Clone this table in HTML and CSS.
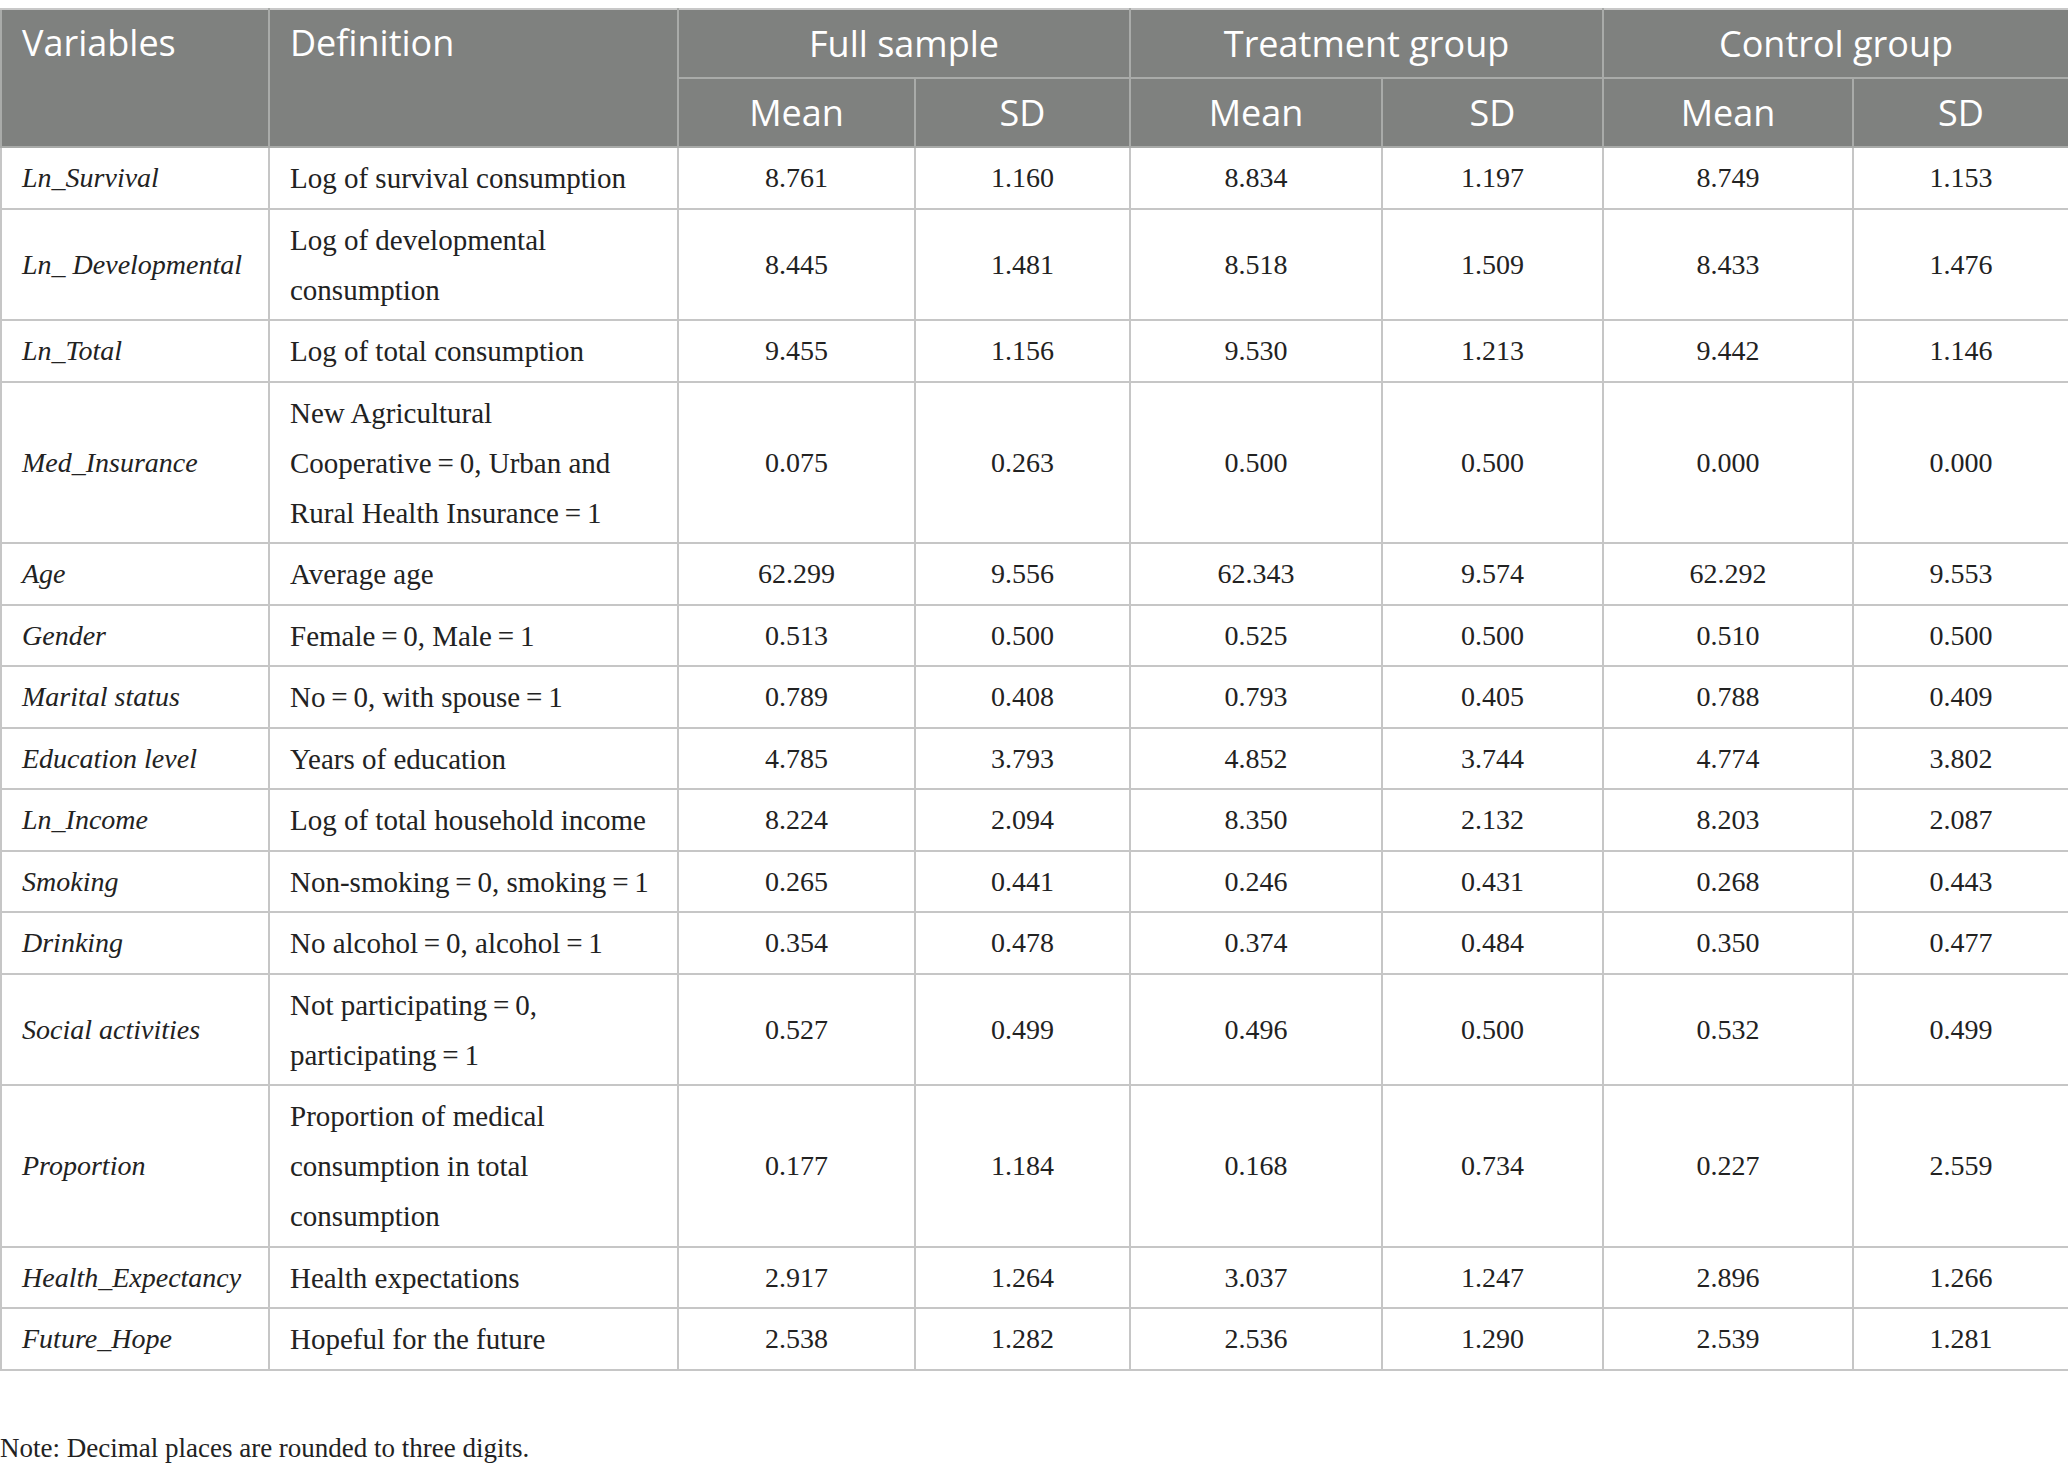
FILE: index.html
```html
<!DOCTYPE html>
<html>
	<head>
		<title>Descriptive statistics</title>
		<meta charset="UTF-8" />
		<link rel="stylesheet" href="styles.css">
	</head>
	<body>
		<table class="stats">
			<colgroup>
				<col class="c-var" />
				<col class="c-def" />
				<col class="c-m1" />
				<col class="c-s1" />
				<col class="c-m2" />
				<col class="c-s2" />
				<col class="c-m3" />
				<col class="c-s3" />
			</colgroup>
			<thead>
				<tr>
					<th rowspan="2" class="left">Variables</th>
					<th rowspan="2" class="left">Definition</th>
					<th colspan="2">Full sample</th>
					<th colspan="2">Treatment group</th>
					<th colspan="2">Control group</th>
				</tr>
				<tr>
					<th>Mean</th>
					<th>SD</th>
					<th>Mean</th>
					<th>SD</th>
					<th>Mean</th>
					<th>SD</th>
				</tr>
			</thead>
			<tbody>
				<tr>
					<td class="var">Ln_Survival</td>
					<td class="def">Log of survival consumption</td>
					<td>8.761</td><td>1.160</td><td>8.834</td><td>1.197</td><td>8.749</td><td>1.153</td>
				</tr>
				<tr>
					<td class="var">Ln_ Developmental</td>
					<td class="def">Log of developmental consumption</td>
					<td>8.445</td><td>1.481</td><td>8.518</td><td>1.509</td><td>8.433</td><td>1.476</td>
				</tr>
				<tr>
					<td class="var">Ln_Total</td>
					<td class="def">Log of total consumption</td>
					<td>9.455</td><td>1.156</td><td>9.530</td><td>1.213</td><td>9.442</td><td>1.146</td>
				</tr>
				<tr>
					<td class="var">Med_Insurance</td>
					<td class="def">New Agricultural Cooperative&#8239;=&#8239;0, Urban and Rural Health Insurance&#8239;=&#8239;1</td>
					<td>0.075</td><td>0.263</td><td>0.500</td><td>0.500</td><td>0.000</td><td>0.000</td>
				</tr>
				<tr>
					<td class="var">Age</td>
					<td class="def">Average age</td>
					<td>62.299</td><td>9.556</td><td>62.343</td><td>9.574</td><td>62.292</td><td>9.553</td>
				</tr>
				<tr>
					<td class="var">Gender</td>
					<td class="def">Female&#8239;=&#8239;0, Male&#8239;=&#8239;1</td>
					<td>0.513</td><td>0.500</td><td>0.525</td><td>0.500</td><td>0.510</td><td>0.500</td>
				</tr>
				<tr>
					<td class="var">Marital status</td>
					<td class="def">No&#8239;=&#8239;0, with spouse&#8239;=&#8239;1</td>
					<td>0.789</td><td>0.408</td><td>0.793</td><td>0.405</td><td>0.788</td><td>0.409</td>
				</tr>
				<tr>
					<td class="var">Education level</td>
					<td class="def">Years of education</td>
					<td>4.785</td><td>3.793</td><td>4.852</td><td>3.744</td><td>4.774</td><td>3.802</td>
				</tr>
				<tr>
					<td class="var">Ln_Income</td>
					<td class="def">Log of total household income</td>
					<td>8.224</td><td>2.094</td><td>8.350</td><td>2.132</td><td>8.203</td><td>2.087</td>
				</tr>
				<tr>
					<td class="var">Smoking</td>
					<td class="def">Non-smoking&#8239;=&#8239;0, smoking&#8239;=&#8239;1</td>
					<td>0.265</td><td>0.441</td><td>0.246</td><td>0.431</td><td>0.268</td><td>0.443</td>
				</tr>
				<tr>
					<td class="var">Drinking</td>
					<td class="def">No alcohol&#8239;=&#8239;0, alcohol&#8239;=&#8239;1</td>
					<td>0.354</td><td>0.478</td><td>0.374</td><td>0.484</td><td>0.350</td><td>0.477</td>
				</tr>
				<tr>
					<td class="var">Social activities</td>
					<td class="def">Not participating&#8239;=&#8239;0, participating&#8239;=&#8239;1</td>
					<td>0.527</td><td>0.499</td><td>0.496</td><td>0.500</td><td>0.532</td><td>0.499</td>
				</tr>
				<tr>
					<td class="var">Proportion</td>
					<td class="def">Proportion of medical consumption in total consumption</td>
					<td>0.177</td><td>1.184</td><td>0.168</td><td>0.734</td><td>0.227</td><td>2.559</td>
				</tr>
				<tr>
					<td class="var">Health_Expectancy</td>
					<td class="def">Health expectations</td>
					<td>2.917</td><td>1.264</td><td>3.037</td><td>1.247</td><td>2.896</td><td>1.266</td>
				</tr>
				<tr>
					<td class="var">Future_Hope</td>
					<td class="def">Hopeful for the future</td>
					<td>2.538</td><td>1.282</td><td>2.536</td><td>1.290</td><td>2.539</td><td>1.281</td>
				</tr>
			</tbody>
		</table>
		<p class="note">Note: Decimal places are rounded to three digits.</p>
	</body>
</html>
```

FILE: styles.css
```css
body {
	margin: 0;
	padding-top: 8px;
	background: #fff;
	color: #222;
	font: 29px "Liberation Serif", serif;
}

.stats {
	width: 2068px;
	border-collapse: collapse;
	table-layout: fixed;
}

.c-var { width: 268px; }
.c-def { width: 409px; }
.c-m1 { width: 237px; }
.c-s1 { width: 215px; }
.c-m2 { width: 252px; }
.c-s2 { width: 221px; }
.c-m3 { width: 250px; }
.c-s3 { width: 216px; }

.stats th {
	background: #7f817f;
	color: #fff;
	font: 36px "Open Sans", sans-serif;
	font-weight: 400;
	height: 67px;
	padding: 0 20px;
	border: 2px solid #a9aba9;
	border-top-color: #c8c8c8;
	text-align: center;
	vertical-align: middle;
	line-height: 50px;
}

.stats th.left {
	text-align: left;
	vertical-align: top;
	padding-top: 8px;
}

.stats td {
	border: 2px solid #c6c6c6;
	padding: 5px 20px 4.5px;
	line-height: 50px;
	text-align: center;
	vertical-align: middle;
	font-size: 28px;
}

.stats td.var {
	text-align: left;
	font-style: italic;
	font-size: 28px;
	white-space: nowrap;
}

.stats td.def {
	text-align: left;
	font-size: 29px;
}

.note {
	margin: 62px 0 0;
	font-size: 27px;
}
```
